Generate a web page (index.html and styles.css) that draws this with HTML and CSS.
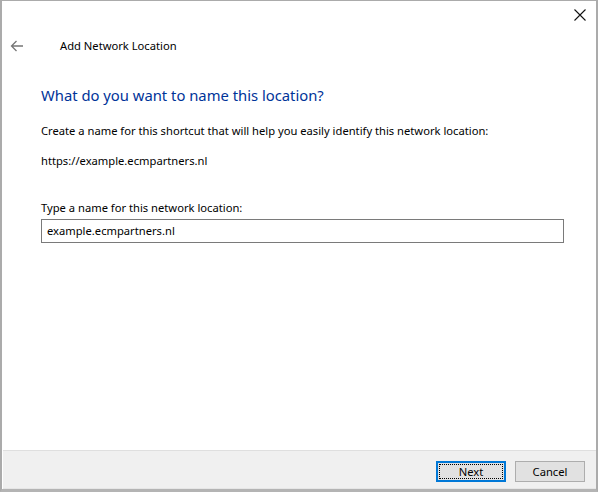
FILE: index.html
```html
<!DOCTYPE html>
<html>
<head>
<meta charset="utf-8">
<link rel="stylesheet" href="styles.css">
</head>
<body>
<div class="window">
  <div class="titlebar">
    <svg class="close" width="12" height="12" viewBox="0 0 12 12"><path d="M0.5 0.5 L11.5 11.5 M11.5 0.5 L0.5 11.5" stroke="#111" stroke-width="1.1" fill="none"/></svg>
  </div>
  <div class="header">
    <svg class="back" width="14" height="12" viewBox="0 0 14 12"><path d="M13 6 H1.5 M6.5 1 L1.5 6 L6.5 11" stroke="#767676" stroke-width="1.3" fill="none"/></svg>
    <span class="title">Add Network Location</span>
  </div>
  <div class="content">
    <h1 class="instruction">What do you want to name this location?</h1>
    <p class="text t1">Create a name for this shortcut that will help you easily identify this network location:</p>
    <p class="text t2">https://example.ecmpartners.nl</p>
    <p class="text t3">Type a name for this network location:</p>
    <div class="input">example.ecmpartners.nl</div>
  </div>
  <div class="footer">
    <div class="btn primary"><span class="focus">Next</span></div>
    <div class="btn">Cancel</div>
  </div>
</div>
</body>
</html>
```
FILE: styles.css
```css
html, body { margin: 0; padding: 0; background: #fff; }
.window {
  width: 598px; height: 492px; box-sizing: border-box;
  border-left: 2px solid #ababab; border-right: 2px solid #ababab;
  border-top: 1px solid #ababab; border-bottom: 3px solid #b4b4b4;
  display: flex; flex-direction: column;
  font-family: "Noto Sans", sans-serif; font-size: 11.2px; color: #000;
}
.titlebar { height: 30px; display: flex; justify-content: flex-end; align-items: flex-start; }
.close { margin-top: 8px; margin-right: 10px; }
.header { height: 29px; display: flex; align-items: center; }
.back { margin-left: 8px; }
.title { margin-left: 36px; }
.content { padding-left: 39px; padding-right: 32px; flex: 1; }
.instruction { margin: 24px 0 0; font-weight: normal; font-size: 14.8px; color: #003399; line-height: 22px; }
.text { margin: 0; line-height: 16px; }
.t1 { margin-top: 17px; }
.t2 { margin-top: 14px; }
.t3 { margin-top: 31px; }
.input { margin-top: 3px; height: 24px; box-sizing: border-box; border: 1px solid #7a7a7a; padding-left: 5px; line-height: 22px; }
.footer {
  height: 39px; box-sizing: border-box; margin-left: 1px;
  background: #f0f0f0; border-top: 1px solid #dfdfdf; border-bottom: 1px solid #e6e6e6;
  display: flex; justify-content: flex-end; align-items: flex-start; padding-top: 10px; padding-right: 11px; gap: 9px;
}
.btn { width: 70px; height: 21px; box-sizing: border-box; background: #e1e1e1; border: 1px solid #adadad; display: flex; align-items: center; justify-content: center; }
.btn.primary { border: 2px solid #0078d7; padding: 1px; }
.focus { width: 100%; height: 100%; box-sizing: border-box; border: 1px dotted #000; display: flex; align-items: center; justify-content: center; }
```
